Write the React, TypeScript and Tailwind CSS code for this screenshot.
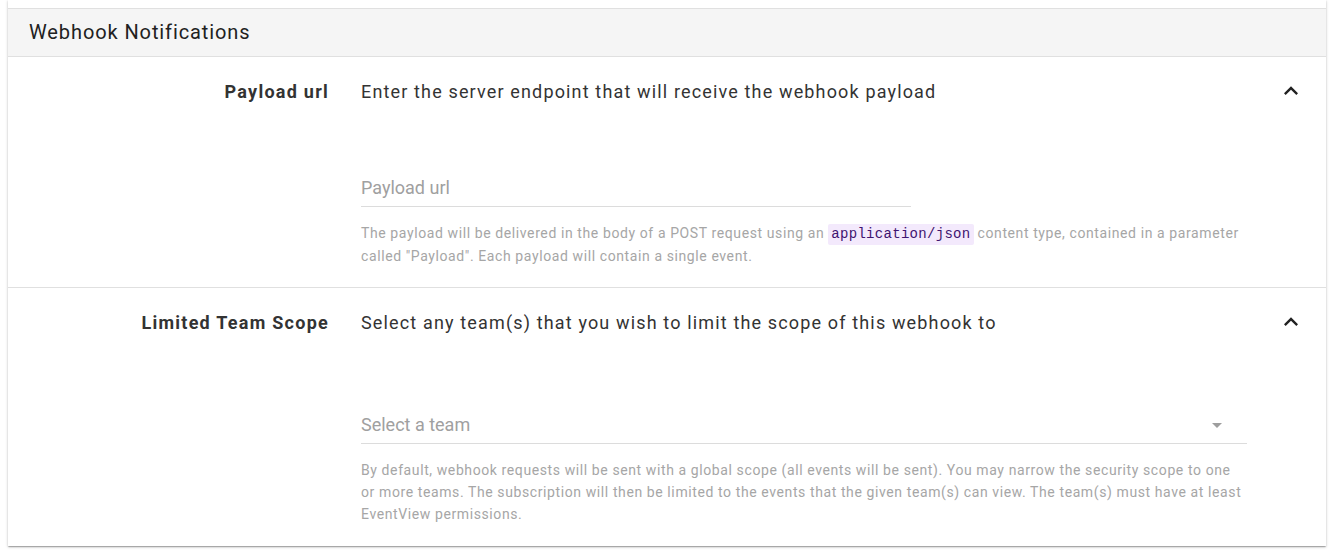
import React from "react";

const ChevronUp = () => (
  <svg width="28" height="28" viewBox="0 0 24 24" className="text-[#212121]">
    <path d="M12 8l-6 6 1.41 1.41L12 10.83l4.59 4.58L18 14z" fill="currentColor" />
  </svg>
);

const ArrowDrop = () => (
  <svg width="24" height="24" viewBox="0 0 24 24" className="text-[#9e9e9e]">
    <path d="M7 10l5 5 5-5z" fill="currentColor" />
  </svg>
);

export default function App() {
  return (
    <div className="min-h-[551px] bg-white" style={{ fontFamily: "Roboto, 'Noto Sans', sans-serif" }}>
      <div className="mx-2 bg-white shadow-[0_1px_3px_0_rgba(0,0,0,0.2),0_1px_1px_0_rgba(0,0,0,0.14),0_2px_1px_-1px_rgba(0,0,0,0.12)]">
        <div className="h-2" />
        <div className="flex h-[49px] items-center border-y border-[#e0e0e0] bg-[#f5f5f5] pb-[2px] pl-[21px] text-[20px] tracking-[0.9px] text-[#212121]">
          Webhook Notifications
        </div>

        {/* Row 1 */}
        <div className="flex border-b border-[#e0e0e0] pt-[21px] pb-[20px]">
          <div className="w-[321px] shrink-0 text-right text-[18px] leading-[28px] font-bold tracking-[1.25px] text-[#333]">
            Payload url
          </div>
          <div className="ml-[32px] w-[886px] shrink-0">
            <div className="text-[18px] leading-[28px] tracking-[1.15px] text-[#333]">
              Enter the server endpoint that will receive the webhook payload
            </div>
            <div className="mt-[68px] w-[550px] border-b border-[#dcdcdc] pb-[4px] text-[18px] leading-[28px] text-[#a0a0a0]">
              Payload url
            </div>
            <div className="mt-[15px] text-[14px] leading-[22px] tracking-[0.6px] text-[#a6a6a6]">
              The payload will be delivered in the body of a POST request using an
              <code
                className="mx-[4px] inline-block rounded-[2px] bg-[#f3e9fc] px-[3px] text-[14px] leading-[21px] tracking-[0.3px] text-[#3f1470]"
                style={{ fontFamily: "'Liberation Mono', 'DejaVu Sans Mono', monospace" }}
              >
                application/json
              </code>
              content type, contained in a parameter called "Payload". Each payload will contain a single event.
            </div>
          </div>
          <div className="flex flex-1 justify-end pr-[21px]">
            <div className="-mt-[1px]">
              <ChevronUp />
            </div>
          </div>
        </div>

        {/* Row 2 */}
        <div className="flex pt-[21px] pb-[21px]">
          <div className="w-[321px] shrink-0 text-right text-[18px] leading-[28px] font-bold tracking-[1.25px] text-[#333]">
            Limited Team Scope
          </div>
          <div className="ml-[32px] w-[886px] shrink-0">
            <div className="text-[18px] leading-[28px] tracking-[1.15px] text-[#333]">
              Select any team(s) that you wish to limit the scope of this webhook to
            </div>
            <div className="mt-[74px] flex items-center justify-between border-b border-[#dcdcdc] pb-[4px] text-[18px] leading-[28px] text-[#a0a0a0]">
              <span>Select a team</span>
              <span className="mr-[18px] flex items-center">
                <ArrowDrop />
              </span>
            </div>
            <div className="mt-[15px] text-[14px] leading-[22px] tracking-[0.6px] text-[#a6a6a6]">
              By default, webhook requests will be sent with a global scope (all events will be sent). You may narrow the security scope to one or more teams. The subscription will then be limited to the events that the given team(s) can view. The team(s) must have at least EventView permissions.
            </div>
          </div>
          <div className="flex flex-1 justify-end pr-[21px]">
            <div className="-mt-[1px]">
              <ChevronUp />
            </div>
          </div>
        </div>
      </div>
    </div>
  );
}
